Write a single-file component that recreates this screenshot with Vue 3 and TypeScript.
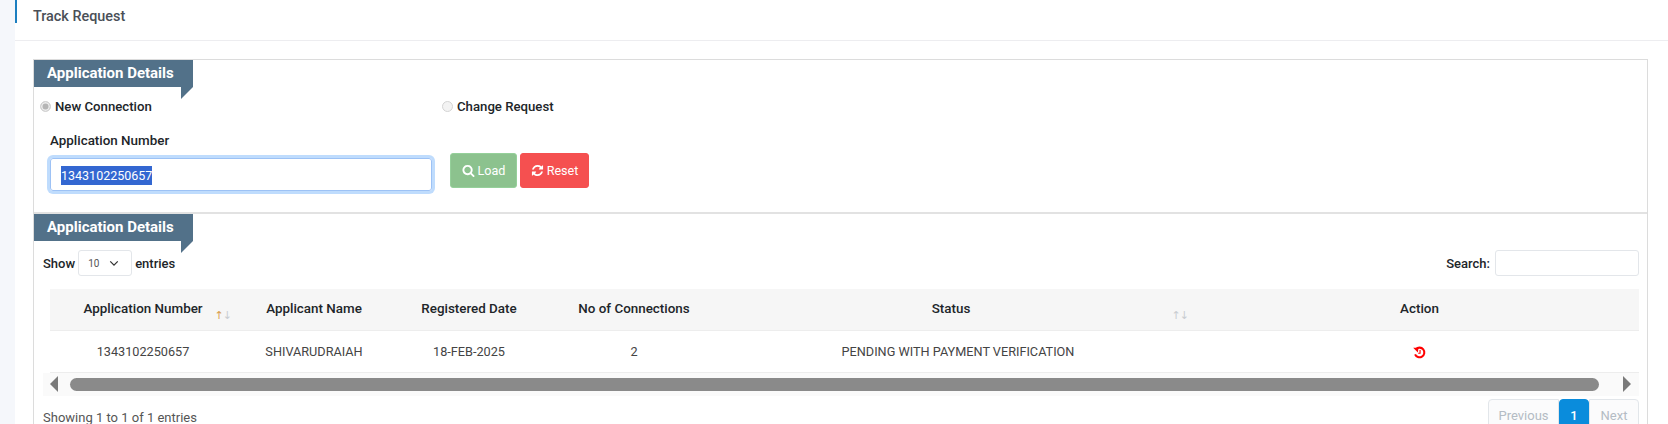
<script setup lang="ts">
const columns: { label: string; sort?: 'active' | 'idle' }[] = [
  { label: 'Application Number', sort: 'active' },
  { label: 'Applicant Name' },
  { label: 'Registered Date' },
  { label: 'No of Connections' },
  { label: 'Status', sort: 'idle' },
  { label: 'Action' },
]
const row = ['1343102250657', 'SHIVARUDRAIAH', '18-FEB-2025', '2', 'PENDING WITH PAYMENT VERIFICATION']
</script>

<template>
  <div class="page">
    <main class="card">
      <header class="head">
        <span class="head-text">Track Request</span>
      </header>
      <section class="panel">
        <div class="block first">
          <div class="ribbon">Application Details</div>
          <div class="radios">
            <label class="radio-item wide"><input type="radio" class="radio on" name="t" checked disabled />New Connection</label>
            <label class="radio-item"><input type="radio" class="radio" name="t" disabled />Change Request</label>
          </div>
          <div class="form-row">
            <div class="field">
              <div class="field-label">Application Number</div>
              <div class="input"><span class="selected">1343102250657</span></div>
            </div>
            <div class="buttons">
              <button class="btn load">
                <svg class="ico" viewBox="0 0 1792 1792"><path fill="currentColor" d="M1216 832q0-185-131.5-316.5t-316.5-131.5-316.5 131.5-131.5 316.5 131.5 316.5 316.5 131.5 316.5-131.5 131.5-316.5zm512 832q0 52-38 90t-90 38q-54 0-90-38l-343-342q-179 124-399 124-143 0-273.5-55.5t-225-150-150-225-55.5-273.5 55.5-273.5 150-225 225-150 273.5-55.5 273.5 55.5 225 150 150 225 55.5 273.5q0 220-124 399l343 343q37 37 37 90z" /></svg>
                Load
              </button>
              <button class="btn reset">
                <svg class="ico" viewBox="0 0 1792 1792"><path fill="currentColor" d="M1639 1056q0 5-1 7-64 268-268 434.5t-478 166.5q-146 0-282.5-55t-243.5-157l-129 129q-19 19-45 19t-45-19-19-45v-448q0-26 19-45t45-19h448q26 0 45 19t19 45-19 45l-137 137q71 66 161 102t187 36q134 0 250-65t186-179q11-17 53-117 8-23 30-23h192q13 0 22.5 9.5t9.5 22.5zm25-800v448q0 26-19 45t-45 19h-448q-26 0-45-19t-19-45 19-45l138-138q-148-137-349-137-134 0-250 65t-186 179q-11 17-53 117-8 23-30 23h-199q-13 0-22.5-9.5t-9.5-22.5v-7q65-268 270-434.5t480-166.5q146 0 284 55.5t245 156.5l130-129q19-19 45-19t45 19 19 45z" /></svg>
                Reset
              </button>
            </div>
          </div>
        </div>

        <div class="block second">
          <div class="ribbon">Application Details</div>
          <div class="toolbar">
            <div class="length">
              Show
              <div class="select">
                <span>10</span>
                <svg class="chev" viewBox="0 0 12 8"><path d="M1.5 1.5 6 6l4.5-4.5" fill="none" stroke="#333" stroke-width="1.5" /></svg>
              </div>
              entries
            </div>
            <div class="search">
              Search:
              <div class="search-input"></div>
            </div>
          </div>
          <table class="table">
            <thead>
              <tr>
                <th v-for="c in columns" :key="c.label" class="th">
                  {{ c.label }}
                  <span v-if="c.sort" class="sort">
                    <i :class="c.sort === 'active' ? 'up-active' : ''">↑</i><i>↓</i>
                  </span>
                </th>
              </tr>
            </thead>
            <tbody>
              <tr>
                <td v-for="cell in row" :key="cell" class="td">{{ cell }}</td>
                <td class="td">
                  <svg class="history" viewBox="0 0 14 14">
                    <path d="M3.2 3.4A5.2 5.2 0 1 1 2.2 9" fill="none" stroke="#f00" stroke-width="2.2" />
                    <path d="M0.2 2 6 1.8 5.2 7Z" fill="#f00" />
                    <path d="M7.6 4.2V7.8H5.6" fill="none" stroke="#f00" stroke-width="1.2" />
                  </svg>
                </td>
              </tr>
            </tbody>
          </table>
          <div class="scrollbar">
            <span class="arrow left"></span>
            <span class="thumb"></span>
            <span class="arrow right"></span>
          </div>
          <div class="foot">
            <span class="info">Showing 1 to 1 of 1 entries</span>
            <nav class="pager">
              <span class="pg prev">Previous</span>
              <span class="pg current">1</span>
              <span class="pg next">Next</span>
            </nav>
          </div>
        </div>
      </section>
    </main>
  </div>
</template>

<style>
html, body { margin: 0; padding: 0; overflow: hidden; background: #f5f7fb; }
</style>

<style scoped>
.page {
  width: 1668px;
  height: 424px;
  overflow: hidden;
  background: #f5f7fb;
  padding-left: 15px;
  box-sizing: border-box;
  font-family: Roboto, "Liberation Sans", sans-serif;
  font-size: 13px;
  color: #212529;
}
.card { background: #fff; height: 424px; overflow: hidden; }
.head {
  height: 40px;
  border-bottom: 1px solid #ededf0;
  box-sizing: content-box;
}
.head-text {
  display: flex;
  align-items: center;
  padding: 6px 0 0 18px;
  box-sizing: border-box;
  height: 27px;
  font-size: 14.4px;
  font-weight: 500;
  color: #4a4f57;
  position: relative;
}
.head-text::before {
  content: "";
  position: absolute;
  left: 0;
  top: 0;
  width: 2px;
  height: 23px;
  background: #1c7fc0;
}
.panel {
  margin: 18px 20px 0 18px;
  border: 1px solid #dcdcdc;
  height: 400px;
}
.block { position: relative; }
.first { height: 152px; }
.second { border-top: 2px solid #e2e2e2; }
.ribbon {
  position: relative;
  width: 159px;
  height: 27px;
  line-height: 26px;
  padding-left: 13px;
  box-sizing: border-box;
  background: #527189;
  color: #fff;
  font-size: 15px;
  font-weight: 700;
  white-space: nowrap;
}
.ribbon::after {
  content: "";
  position: absolute;
  right: 0;
  bottom: -12px;
  border-style: solid;
  border-width: 12px 12px 0 0;
  border-color: #527189 transparent transparent transparent;
}
.radios {
  display: flex;
  margin-top: 12px;
  padding-left: 6px;
  height: 14px;
  align-items: center;
  font-size: 13.2px;
  font-weight: 500;
  color: #212529;
}
.radio-item { display: flex; align-items: center; }
.radio-item.wide { width: 402px; }
.radio {
  appearance: none;
  width: 11px;
  height: 11px;
  margin: 0 4px 0 0;
  border: 1px solid #d4d4d4;
  border-radius: 50%;
  background: #f3f3f3;
  box-sizing: border-box;
}
.radio.on {
  background: #b5b5b5;
  box-shadow: inset 0 0 0 1.5px #ececec;
}
.form-row { display: flex; padding-left: 16px; margin-top: 20px; }
.field { width: 382px; }
.field-label { font-size: 13.4px; font-weight: 500; height: 17px; line-height: 16px; color: #212529; }
.input {
  margin-top: 8px;
  width: 382px;
  height: 33px;
  box-sizing: border-box;
  border: 1px solid #9dc2f5;
  border-radius: 3px;
  box-shadow: 0 0 0 3px #bfdcfd;
  padding: 7px 0 0 10px;
  line-height: 19px;
}
.selected {
  display: inline-block;
  background: #3367d1;
  color: #fff;
  height: 19px;
  line-height: 19px;
  font-size: 12.5px;
}
.buttons { display: flex; gap: 3px; margin-left: 18px; margin-top: 20px; align-items: flex-start; }
.btn {
  display: flex;
  align-items: center;
  justify-content: center;
  gap: 3px;
  height: 35px;
  padding: 0;
  border-radius: 3px;
  color: #fff;
  font-family: inherit;
  font-size: 12.6px;
}
.load { width: 67px; background: #8cc28e; border: 1px solid #95d09a; }
.reset { width: 69px; background: #f55050; border: 1px solid #f55050; }
.ico { width: 13px; height: 13px; }
.toolbar {
  display: flex;
  justify-content: space-between;
  align-items: center;
  margin-top: 9px;
  padding: 0 8px 0 9px;
  height: 26px;
  font-weight: 500;
}
.length, .search { display: flex; align-items: center; }
.select {
  display: flex;
  align-items: center;
  box-sizing: border-box;
  width: 54px;
  height: 26px;
  margin: 0 3px 0 3px;
  padding-left: 9px;
  border: 1px solid #e3e6ea;
  border-radius: 3px;
  font-size: 10px;
  font-weight: 400;
  color: #555;
}
.chev { width: 10px; height: 7px; margin-left: 10px; }
.search-input {
  box-sizing: border-box;
  width: 144px;
  height: 26px;
  margin-left: 5px;
  border: 1px solid #e3e6ea;
  border-radius: 3px;
}
.table {
  border-collapse: collapse;
  table-layout: fixed;
  width: 1589px;
  margin: 13px 0 0 16px;
}
.th {
  position: relative;
  height: 41px;
  padding: 0 0 1px;
  box-sizing: border-box;
  background: #f6f6f6;
  border-bottom: 1px solid #ededed;
  font-size: 13.4px;
  font-weight: 500;
  text-align: center;
  color: #212529;
}
.td {
  height: 42px;
  padding: 0;
  box-sizing: border-box;
  border-bottom: 1px solid #ededed;
  text-align: center;
  font-size: 12.7px;
  color: #444;
}
.td:nth-child(5) { padding-right: 6px; }
.th:nth-child(1) { width: 186px; }
.th:nth-child(2) { width: 156px; }
.th:nth-child(3) { width: 154px; }
.th:nth-child(4) { width: 176px; }
.th:nth-child(5) { width: 478px; padding-right: 20px; }
.sort {
  position: absolute;
  right: 5px;
  top: 20px;
  font-size: 11px;
  line-height: 14px;
  color: #c9cdd1;
  font-family: "DejaVu Sans", sans-serif;
}
.th:nth-child(5) .sort { right: 12px; }
.sort i { font-style: normal; letter-spacing: -2px; margin-right: 1px; }
.sort .up-active { color: #d9a050; }
.history { width: 13px; height: 13px; vertical-align: middle; }
.scrollbar {
  position: relative;
  display: flex;
  align-items: center;
  height: 23px;
  margin: 0 8px 0 9px;
  background: #fafafa;
}
.thumb {
  position: absolute;
  left: 27px;
  width: 1529px;
  height: 13px;
  border-radius: 7px;
  background: #8a8a8a;
}
.arrow { position: absolute; border-style: solid; border-color: transparent; }
.arrow.left { left: 7px; border-width: 8px 8px 8px 0; border-right-color: #7a7a7a; }
.arrow.right { right: 8px; border-width: 8px 0 8px 8px; border-left-color: #7a7a7a; }
.foot {
  display: flex;
  justify-content: space-between;
  margin: 3px 8px 0 9px;
  color: #555;
  font-size: 13px;
}
.info { margin-top: 10px; line-height: 18px; }
.pager { display: flex; height: 38px; }
.pg {
  display: flex;
  justify-content: center;
  padding-top: 7px;
  box-sizing: border-box;
  border: 1px solid #e2e6ea;
  color: #b4bcc4;
  background: #fbfbfc;
  line-height: 18px;
}
.prev { width: 71px; border-radius: 4px 0 0 4px; }
.current {
  width: 30px;
  background: #0a8cdc;
  border-color: #0a8cdc;
  color: #fff;
  font-weight: 500;
  border-radius: 4px 4px 0 0;
}
.next { width: 50px; border-radius: 0 4px 0 0; }
</style>
